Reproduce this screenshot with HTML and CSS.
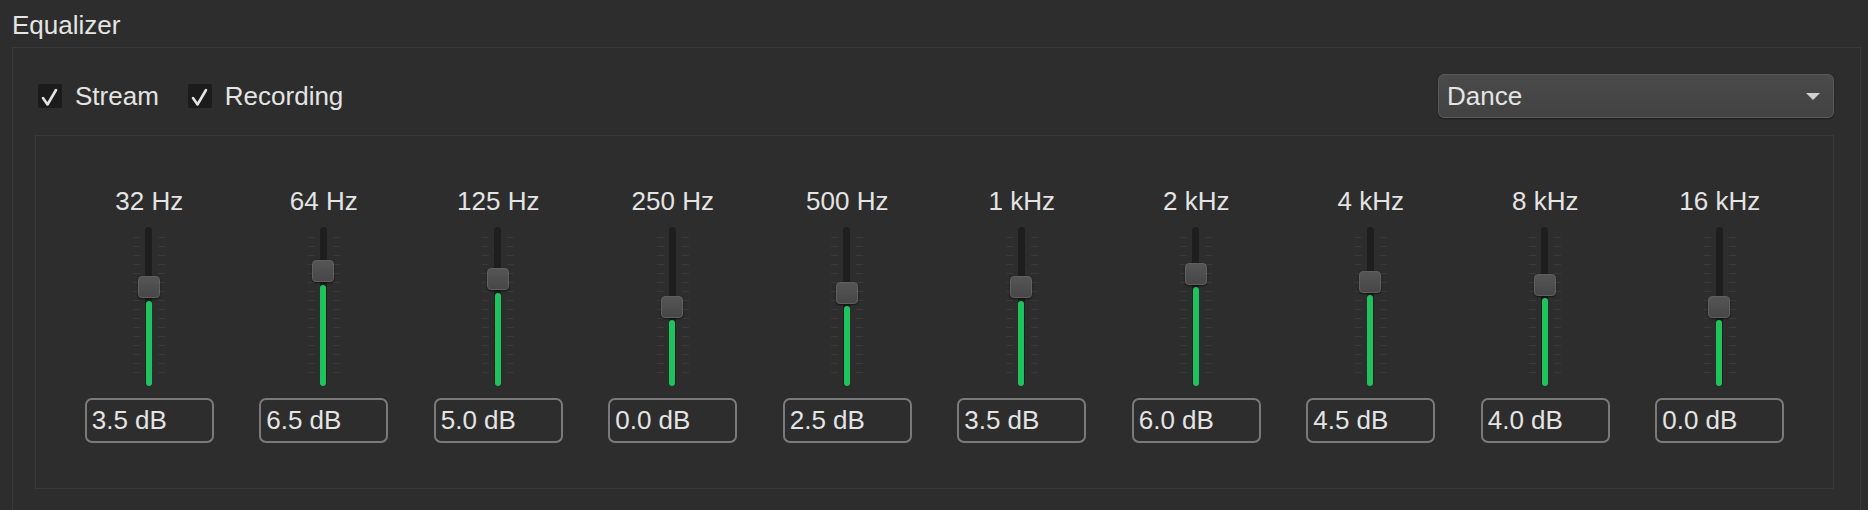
FILE: index.html
```html
<!DOCTYPE html>
<html>
<head>
<meta charset="utf-8">
<title>Equalizer</title>
<link rel="stylesheet" href="styles.css">
</head>
<body>
<div class="title">Equalizer</div>
<div class="group">
  <div class="toolbar">
    <label class="check">
      <span class="box"><svg viewBox="0 0 24 24" width="24" height="24"><polyline points="5,14 9.5,20.5 18,6" fill="none" stroke="#e2e2e2" stroke-width="2.6" stroke-linecap="round" stroke-linejoin="round"/></svg></span>
      <span class="check-label">Stream</span>
    </label>
    <label class="check">
      <span class="box"><svg viewBox="0 0 24 24" width="24" height="24"><polyline points="5,14 9.5,20.5 18,6" fill="none" stroke="#e2e2e2" stroke-width="2.6" stroke-linecap="round" stroke-linejoin="round"/></svg></span>
      <span class="check-label">Recording</span>
    </label>
    <div class="select"><span class="select-text">Dance</span><span class="arrow"></span></div>
  </div>
  <div class="bands">
    <div class="band" style="--db:3.5"><div class="freq">32 Hz</div><div class="slider"><div class="track"></div><div class="fill"></div><div class="knob"></div></div><div class="value">3.5 dB</div></div>
    <div class="band" style="--db:6.5"><div class="freq">64 Hz</div><div class="slider"><div class="track"></div><div class="fill"></div><div class="knob"></div></div><div class="value">6.5 dB</div></div>
    <div class="band" style="--db:5.0"><div class="freq">125 Hz</div><div class="slider"><div class="track"></div><div class="fill"></div><div class="knob"></div></div><div class="value">5.0 dB</div></div>
    <div class="band" style="--db:0"><div class="freq">250 Hz</div><div class="slider"><div class="track"></div><div class="fill"></div><div class="knob"></div></div><div class="value">0.0 dB</div></div>
    <div class="band" style="--db:2.5"><div class="freq">500 Hz</div><div class="slider"><div class="track"></div><div class="fill"></div><div class="knob"></div></div><div class="value">2.5 dB</div></div>
    <div class="band" style="--db:3.5"><div class="freq">1 kHz</div><div class="slider"><div class="track"></div><div class="fill"></div><div class="knob"></div></div><div class="value">3.5 dB</div></div>
    <div class="band" style="--db:6.0"><div class="freq">2 kHz</div><div class="slider"><div class="track"></div><div class="fill"></div><div class="knob"></div></div><div class="value">6.0 dB</div></div>
    <div class="band" style="--db:4.5"><div class="freq">4 kHz</div><div class="slider"><div class="track"></div><div class="fill"></div><div class="knob"></div></div><div class="value">4.5 dB</div></div>
    <div class="band" style="--db:4.0"><div class="freq">8 kHz</div><div class="slider"><div class="track"></div><div class="fill"></div><div class="knob"></div></div><div class="value">4.0 dB</div></div>
    <div class="band" style="--db:0"><div class="freq">16 kHz</div><div class="slider"><div class="track"></div><div class="fill"></div><div class="knob"></div></div><div class="value">0.0 dB</div></div>
  </div>
</div>
</body>
</html>
```

FILE: styles.css
```css
html {
  overflow: hidden;
}

body {
  margin: 0;
  background: #2d2d2d;
  font-family: "Liberation Sans", Arial, sans-serif;
  font-size: 26px;
  line-height: 30px;
  color: #e4e4e4;
}

.title {
  height: 30px;
  padding: 10px 0 0 12px;
}

.group {
  margin: 7px 7px 0 12px;
  border: 1px solid #393939;
  padding: 26px 26px 40px 22px;
}

.toolbar {
  display: flex;
  align-items: center;
  height: 44px;
  padding-left: 3px;
}

.check {
  display: flex;
  align-items: center;
  gap: 13px;
  margin-right: 29px;
}

.box {
  display: block;
  width: 24px;
  height: 24px;
  background: #1b1b1b;
  border-radius: 2px;
}

.box svg {
  display: block;
}

.select {
  margin-left: auto;
  width: 396px;
  height: 44px;
  box-sizing: border-box;
  border: 1px solid #595959;
  border-radius: 6px;
  background: linear-gradient(#4a4a4a, #424242);
  box-shadow: 0 1px 2px rgba(0, 0, 0, 0.35);
  padding-left: 8px;
  display: flex;
  align-items: center;
  justify-content: space-between;
}

.arrow {
  width: 0;
  height: 0;
  border-left: 7.5px solid transparent;
  border-right: 7.5px solid transparent;
  border-top: 7px solid #cfcfcf;
  margin-right: 13px;
}

.bands {
  margin-top: 17px;
  border: 1px solid #393939;
  padding: 50px 26px 45px;
  display: grid;
  grid-template-columns: repeat(10, 1fr);
}

.band {
  display: flex;
  flex-direction: column;
  align-items: center;
}

.freq {
  height: 30px;
}

.slider {
  position: relative;
  width: 40px;
  height: 159px;
  margin-top: 11px;
}

.slider::before,
.slider::after {
  content: "";
  position: absolute;
  top: 10px;
  bottom: 10px;
  width: 7px;
  background: repeating-linear-gradient(to bottom, rgba(255, 255, 255, 0.06) 0 1px, transparent 1px 9px);
}

.slider::before {
  left: 4px;
}

.slider::after {
  right: 4px;
}

.track {
  position: absolute;
  left: 50%;
  top: 0;
  bottom: 0;
  width: 7px;
  margin-left: -4px;
  background: #1e1e1e;
  border-radius: 3.5px;
}

.fill {
  position: absolute;
  left: 50%;
  bottom: 0;
  top: calc(93px - var(--db) * 5.46px);
  width: 6px;
  margin-left: -3.5px;
  background: #20c25e;
  border-radius: 3px;
}

.knob {
  position: absolute;
  left: 50%;
  top: calc(68.5px - var(--db) * 5.46px);
  width: 22px;
  height: 22px;
  margin-left: -11.5px;
  box-sizing: border-box;
  border: 1px solid #5f5f5f;
  border-radius: 4px;
  background: linear-gradient(#555555, #474747);
  box-shadow: 0 1px 2px rgba(0, 0, 0, 0.5);
}

.value {
  margin-top: 12px;
  width: 129px;
  height: 45px;
  box-sizing: border-box;
  border: 2px solid #7a7a7a;
  border-radius: 7px;
  padding-left: 5px;
  line-height: 41px;
}
```
